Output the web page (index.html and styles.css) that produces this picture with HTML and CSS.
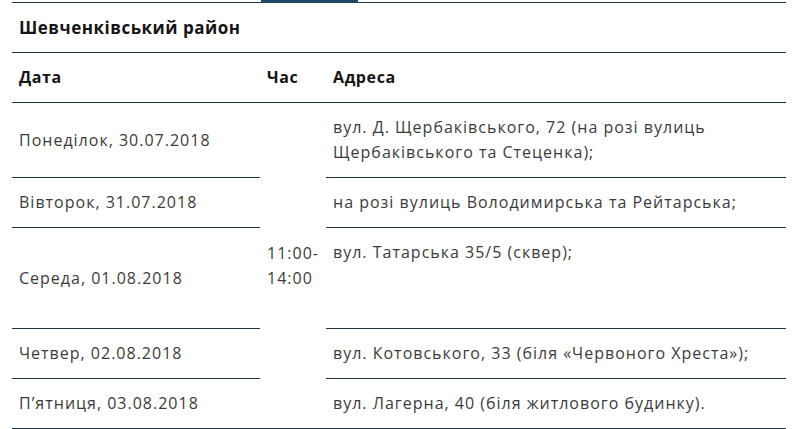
FILE: index.html
```html
<!DOCTYPE html>
<html lang="uk">
<head>
<meta charset="utf-8">
<link rel="stylesheet" href="styles.css">
</head>
<body>
<div class="wrap">
  <div class="tab-mark"></div>
  <table class="schedule">
    <colgroup>
      <col class="col-date">
      <col class="col-time">
      <col class="col-addr">
    </colgroup>
    <thead>
      <tr><th class="district" colspan="3">Шевченківський район</th></tr>
      <tr class="head">
        <th>Дата</th>
        <th>Час</th>
        <th>Адреса</th>
      </tr>
    </thead>
    <tbody>
      <tr>
        <td class="c-date">Понеділок, 30.07.2018</td>
        <td class="c-time" rowspan="5">11:00-<br>14:00</td>
        <td class="c-addr">вул. Д. Щербаківського, 72 (на розі вулиць Щербаківського та Стеценка);</td>
      </tr>
      <tr>
        <td class="c-date">Вівторок, 31.07.2018</td>
        <td class="c-addr">на розі вулиць Володимирська та Рейтарська;</td>
      </tr>
      <tr>
        <td class="c-date">Середа, 01.08.2018</td>
        <td class="c-addr tall">вул. Татарська 35/5 (сквер);</td>
      </tr>
      <tr>
        <td class="c-date">Четвер, 02.08.2018</td>
        <td class="c-addr">вул. Котовського, 33 (біля «Червоного Хреста»);</td>
      </tr>
      <tr>
        <td class="c-date">П’ятниця, 03.08.2018</td>
        <td class="c-addr">вул. Лагерна, 40 (біля житлового будинку).</td>
      </tr>
    </tbody>
  </table>
</div>
</body>
</html>
```

FILE: styles.css
```css
html, body {
  margin: 0;
  padding: 0;
  background: #ffffff;
}

body {
  font-family: "Open Sans", "DejaVu Sans", sans-serif;
  color: #3b3b3b;
}

.wrap {
  position: relative;
  padding: 2px 0 0 12px;
}

.tab-mark {
  position: absolute;
  left: 261px;
  top: 0;
  width: 97px;
  height: 3px;
  background: #1d4a6b;
}

.schedule {
  width: 774px;
  border-collapse: separate;
  border-spacing: 0;
  border-top: 1px solid #1f3647;
  font-size: 16px;
  line-height: 25px;
  letter-spacing: 1px;
  table-layout: fixed;
}

.col-date { width: 248px; }
.col-time { width: 66px; }
.col-addr { width: 460px; }

.schedule th,
.schedule td {
  padding: 12px 7px;
  border-bottom: 1px solid #1f3647;
  text-align: left;
  vertical-align: top;
}

.schedule th {
  color: #151515;
  font-weight: 700;
  vertical-align: middle;
  letter-spacing: 0.6px;
}

.schedule th.district {
  font-size: 17px;
  letter-spacing: 0.5px;
}

.schedule td.c-date,
.schedule td.c-time {
  vertical-align: middle;
}

.schedule td.tall {
  padding-bottom: 63px;
}
```
